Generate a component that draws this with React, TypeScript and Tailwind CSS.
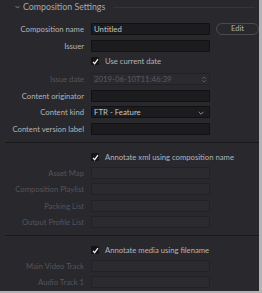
import React from "react";

const font = { fontFamily: 'Lato, "Open Sans", sans-serif' };

function Label({ text, disabled }: { text: string; disabled?: boolean }) {
  return (
    <div
      className={`w-[84px] shrink-0 text-right text-[7.7px] leading-[12px] whitespace-nowrap ${
        disabled ? "text-[#55555a]" : "text-[#b4b4b8]"
      }`}
    >
      {text}
    </div>
  );
}

function Field({
  label,
  value,
  disabled,
  mt,
  children,
}: {
  label: string;
  value?: string;
  disabled?: boolean;
  mt: string;
  children?: React.ReactNode;
}) {
  return (
    <div className={`flex items-center h-[12px] ${mt}`}>
      <Label text={label} disabled={disabled} />
      <div
        className={`ml-[7px] w-[119px] h-[12px] rounded-[1px] border flex items-center px-[2px] relative ${
          disabled
            ? "bg-[#2a2a2f] border-[#222226]"
            : "bg-[#1c1c1e] border-[#111113]"
        }`}
      >
        {value && (
          <span
            className={`text-[7.8px] leading-[10px] whitespace-nowrap ${
              disabled ? "text-[#5a5a5f]" : "text-[#c4c4c8]"
            }`}
          >
            {value}
          </span>
        )}
        {children}
      </div>
    </div>
  );
}

function Check({ text, mt }: { text: string; mt: string }) {
  return (
    <div className={`flex items-center h-[12px] ${mt}`}>
      <div className="w-[84px] shrink-0" />
      <div className="ml-[7px] w-[8px] h-[8px] bg-[#141416] rounded-[1px] flex items-center justify-center">
        <svg width="7" height="7" viewBox="0 0 8 8">
          <path d="M1.2 4.4 L3 6.4 L6.8 1.2" fill="none" stroke="#f0f0f0" strokeWidth="1.5" />
        </svg>
      </div>
      <span className="ml-[6px] text-[7.7px] leading-[12px] text-[#b4b4b8] whitespace-nowrap">{text}</span>
    </div>
  );
}

export default function App() {
  return (
    <div className="w-[262px] h-[293px] bg-[#b4b4b4]" style={font}>
      <div className="w-[259px] h-[291px] bg-[#28282d] overflow-hidden flex flex-col">
        <div className="flex items-center h-[14px] mt-[0px]">
          <svg className="ml-[15px]" width="5" height="4" viewBox="0 0 5 4">
            <path d="M0.5 1 L2.5 3 L4.5 1" fill="none" stroke="#8a8a8f" strokeWidth="0.9" />
          </svg>
          <span className="ml-[3px] text-[8.8px] leading-[12px] text-[#a8a8ad] whitespace-nowrap">
            Composition Settings
          </span>
          <div className="ml-[8px] flex-1 h-px bg-[#35353a] mr-[4px]" />
        </div>

        <div className="flex items-center h-[12px] mt-[9px]">
          <Label text="Composition name" />
          <div className="ml-[7px] w-[119px] h-[12px] rounded-[1px] border bg-[#1c1c1e] border-[#111113] flex items-center px-[2px]">
            <span className="text-[7.8px] leading-[10px] text-[#c4c4c8]">Untitled</span>
          </div>
          <div className="ml-[6px] w-[43px] h-[12px] shrink-0 rounded-full border border-[#4a4a50] flex items-center justify-center">
            <span className="text-[7.5px] leading-[10px] text-[#b4b4b8]">Edit</span>
          </div>
        </div>
        <Field label="Issuer" mt="mt-[5px]" />
        <Check text="Use current date" mt="mt-[3px]" />
        <Field label="Issue date" value="2019-06-10T11:46:39" disabled mt="mt-[6px]">
          <svg className="absolute right-[2px] top-[2px]" width="6" height="7" viewBox="0 0 6 7">
            <path d="M1 2.8 L3 1 L5 2.8 M1 4.2 L3 6 L5 4.2" fill="none" stroke="#5a5a5f" strokeWidth="0.9" />
          </svg>
        </Field>
        <Field label="Content originator" mt="mt-[5px]" />
        <Field label="Content kind" value="FTR - Feature" mt="mt-[4px]">
          <svg className="absolute right-[5px] top-[3.5px]" width="6" height="4" viewBox="0 0 6 4">
            <path d="M0.6 0.8 L3 3.2 L5.4 0.8" fill="none" stroke="#9a9a9f" strokeWidth="0.9" />
          </svg>
        </Field>
        <Field label="Content version label" mt="mt-[5px]" />

        <div className="mt-[7px] ml-[5px] h-px bg-[#19191b]" />
        <Check text="Annotate xml using composition name" mt="mt-[8px]" />
        <Field label="Asset Map" disabled mt="mt-[4px]" />
        <Field label="Composition Playlist" disabled mt="mt-[4px]" />
        <Field label="Packing List" disabled mt="mt-[5px]" />
        <Field label="Output Profile List" disabled mt="mt-[4px]" />

        <div className="mt-[7px] ml-[5px] h-px bg-[#19191b]" />
        <Check text="Annotate media using filename" mt="mt-[8px]" />
        <Field label="Main Video Track" disabled mt="mt-[4px]" />
        <Field label="Audio Track 1" disabled mt="mt-[4px]" />
      </div>
    </div>
  );
}
